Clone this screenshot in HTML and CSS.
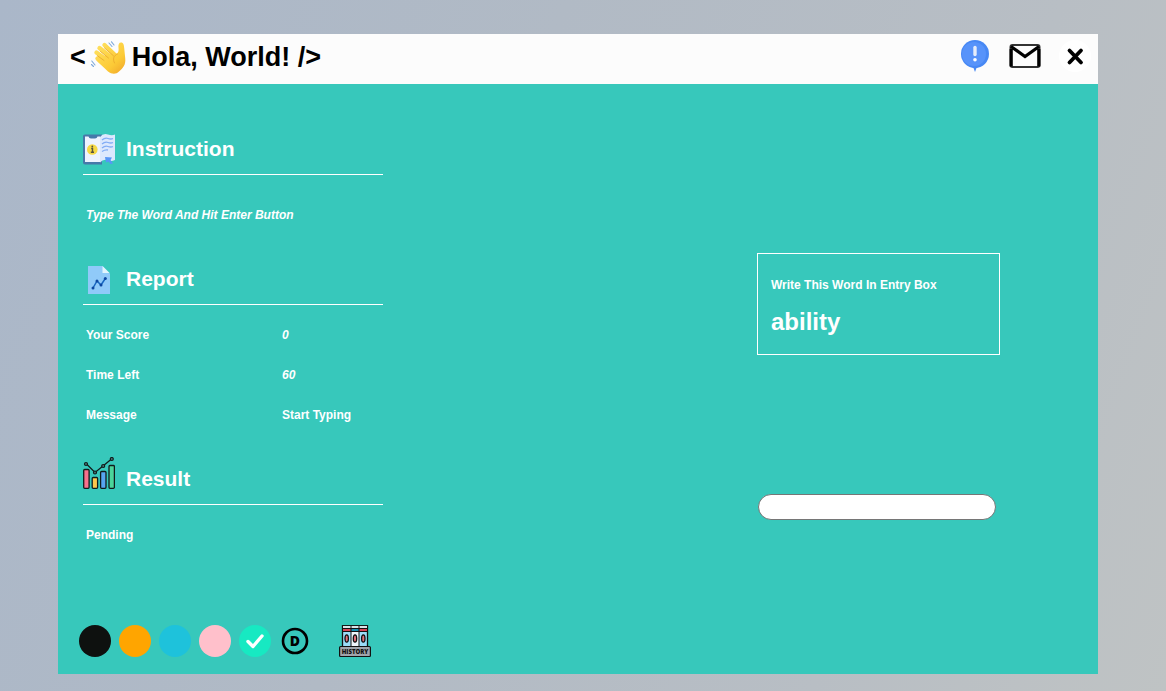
FILE: index.html
```html
<!DOCTYPE html>
<html lang="en">
<head>
<meta charset="utf-8">
<meta name="viewport" content="width=device-width, initial-scale=1">
<title>Hola, World!</title>
<link rel="stylesheet" href="styles.css">
</head>
<body>
<div class="window">
  <header class="topbar">
    <h1 class="brand">
      <span>&lt;</span>
      <svg class="wave" viewBox="0 0 38 36" aria-hidden="true">
        <defs>
          <linearGradient id="skin" gradientUnits="userSpaceOnUse" x1="6" y1="4" x2="34" y2="34">
            <stop offset="0" stop-color="#ffe262"/><stop offset=".65" stop-color="#fcca36"/><stop offset="1" stop-color="#f0a42a"/>
          </linearGradient>
        </defs>
        <g fill="none" stroke="url(#skin)" stroke-linecap="round">
          <path stroke-width="4.400" d="M6.500 12.500L18 21M9.500 8L22 18M14.500 5L26 16M7.500 18.500L15 25"/>
        </g>
        <path fill="url(#skin)" d="M13 16L25 13.500C28 14.500 29 11 28.500 8C28 4.500 29 2.500 31 2.500C33.500 2.500 34 5 34.200 8L35.200 18C36 25 33 28 29 31.500C26 34.500 22 34.500 18 31.500L8 22C6 19.500 8 17 10 18Z"/>
        <g fill="none" stroke="#e9a62b" stroke-width=".8" stroke-linecap="round">
          <path d="M7.500 15.800L14 20.500M10.500 11.500L18.500 18M14.500 8L23.500 15.800M27.500 14C23.500 15.500 22.500 19 24.500 23"/>
        </g>
        <g fill="none" stroke="#7fa9da" stroke-width="1.100" stroke-linecap="round">
          <path d="M19 3L22 6.500M21.500 1.800L24 5M1.800 21L5 25M1.500 24.500L3.500 26.500"/>
        </g>
      </svg>
      <span class="brand-name">Hola, World! /&gt;</span>
    </h1>
    <nav class="actions" aria-label="Window">
      <button class="icon-button" type="button" aria-label="About">
        <svg viewBox="0 0 32 32"><circle cx="16" cy="14" r="14" fill="#4788f4"/><path fill="#4788f4" d="M10 25L14.500 28L16 32L17.500 28L22 25Z"/><circle cx="15" cy="14" r="12" fill="#5793fa"/><path fill="none" stroke="#e6edfa" stroke-width="3.400" stroke-linecap="round" d="M16 7.500V14.500"/><circle cx="16" cy="19.800" r="1.800" fill="#fff"/></svg>
      </button>
      <button class="icon-button" type="button" aria-label="Mail">
        <svg viewBox="0 0 32 32"><rect x="1.500" y="5" width="29" height="22" rx="2" fill="none" stroke="#333" stroke-width="2"/><path fill="none" stroke="#000" stroke-width="3.200" d="M2.200 9V26.500M29.800 9V26.500M2 6.500L16 16.500L30 6.500"/></svg>
      </button>
      <button class="icon-button close" type="button" aria-label="Close">
        <svg viewBox="0 0 32 32"><path fill="none" stroke="#000" stroke-width="3.800" stroke-linecap="round" d="M10.500 10.500L22 22.500M22 10.500L10.500 22.500"/></svg>
      </button>
    </nav>
  </header>

  <main class="content">
    <div class="panels">
      <section class="panel">
        <h2 class="panel-title">
          <svg class="panel-icon" viewBox="0 0 32 32" aria-hidden="true"><path fill="#4679aa" d="M0 3Q0 1.500 2 1.500H19V31.500H2Q0 31.500 0 29.500Z"/><path fill="#edf3ff" d="M2 3.500H5.500Q6 5.500 8 5.500H12Q14 5.500 14.500 3.500H17V29H2Z"/><circle cx="9.300" cy="16.500" r="5.300" fill="#f6d946"/><path fill="none" stroke="#58553f" stroke-width="1.400" d="M8.200 15.500H9.500V19M7.800 19.300H11"/><circle cx="9.300" cy="13.500" r=".9" fill="#58553f"/><path fill="#dce8fd" d="M17 4Q20 0 25 1.500Q29 3 32 1.500V27Q28 29 24 27Q20 26 17 29.500Z"/><path fill="none" stroke="#82acf5" stroke-width="1.300" d="M19 7Q22 4.500 25 5.500T30 5.500M19 11Q22 8.500 25 9.500T30 9.500M19 15Q22 12.500 25 13.500T30 13.500M19 18.500Q22 16.500 25 17"/><path fill="#5796f7" d="M22 24L29 24.500L27.500 27L30 30.500L27.500 31L25.500 28.500L23 29.500Z"/></svg>
          Instruction
        </h2>
        <p class="row hint">Type The Word And Hit Enter Button</p>
      </section>

      <section class="panel">
        <h2 class="panel-title">
          <svg class="panel-icon" viewBox="0 0 32 32" aria-hidden="true"><path fill="#90caf9" d="M5 3H19.500L27 10.500V31H5Z"/><path fill="#e1f5fe" d="M19.500 3L26.500 10H19.500Z"/><path fill="none" stroke="#1765c0" stroke-width="1.500" d="M10 25L14 18L18 22L22.300 15.500"/><g fill="#0d47a1"><circle cx="10" cy="25" r="1.500"/><circle cx="14" cy="18" r="1.500"/><circle cx="18" cy="22" r="1.500"/><circle cx="22.300" cy="15.500" r="1.500"/></g></svg>
          Report
        </h2>
        <dl class="stats">
          <div class="row stat"><dt>Your Score</dt><dd class="number">0</dd></div>
          <div class="row stat"><dt>Time Left</dt><dd class="number">60</dd></div>
          <div class="row stat"><dt>Message</dt><dd>Start Typing</dd></div>
        </dl>
      </section>

      <section class="panel">
        <h2 class="panel-title">
          <svg class="panel-icon tall" viewBox="0 0 32 44" aria-hidden="true"><g stroke="#111c1c" stroke-width="1.300"><rect x=".7" y="12.500" width="5.400" height="18.800" rx="1" fill="#f8718d"/><rect x="9.200" y="20.500" width="5.400" height="10.800" rx="1" fill="#fbc64c"/><rect x="17.600" y="14.500" width="5.400" height="16.800" rx="1" fill="#57a5f0"/><rect x="26" y="8.500" width="5.400" height="22.800" rx="1" fill="#4bd59b"/></g><path fill="none" stroke="#111c1c" stroke-width="1.300" d="M3.500 7L12 15.500L20 9L28.500 2"/><g fill="#467a79" stroke="#111c1c" stroke-width="1.200"><circle cx="3" cy="7" r="1.500"/><circle cx="12" cy="15.500" r="1.500"/><circle cx="20.200" cy="9" r="1.500"/><circle cx="28.800" cy="2" r="1.500"/></g></svg>
          Result
        </h2>
        <p class="row result">Pending</p>
      </section>
    </div>

    <form class="typing">
      <label class="word-card" for="entry">
        <span>Write This Word In Entry Box</span>
        <strong class="word">ability</strong>
      </label>
      <input class="entry" id="entry" type="text" autocomplete="off">
    </form>
  </main>

  <footer class="toolbar">
    <button class="swatch black" type="button" aria-label="Black theme"></button>
    <button class="swatch orange" type="button" aria-label="Orange theme"></button>
    <button class="swatch blue" type="button" aria-label="Blue theme"></button>
    <button class="swatch pink" type="button" aria-label="Pink theme"></button>
    <button class="swatch green" type="button" aria-label="Green theme" aria-pressed="true">
      <svg viewBox="0 0 32 32"><path fill="none" stroke="#fff" stroke-width="3.400" stroke-linecap="round" stroke-linejoin="round" d="M9 16.500L14 21.500L23 11"/></svg>
    </button>
    <button class="swatch default" type="button" aria-label="Default theme">
      <svg viewBox="0 0 32 32"><circle cx="16" cy="16" r="12" fill="none" stroke="#000" stroke-width="2.600"/><text class="default-text" x="16" y="21" text-anchor="middle">D</text></svg>
    </button>
    <button class="history" type="button" aria-label="History">
      <svg viewBox="0 0 32 32"><rect x="3.500" y=".7" width="25" height="21" fill="#9bdcf8" stroke="#111" stroke-width="1.300"/><path fill="#eef5fb" d="M12 1H20V21H12Z"/><path fill="#d9e4e8" d="M4 1H28V3.500H4Z"/><path fill="#d64355" d="M4 3.500H12V6.500H4ZM20 3.500H28V6.500H20Z"/><path fill="#168eb0" d="M12 3.500H20V6.500H12Z"/><path stroke="#111" d="M12 1V21M20 1V21M3.500 3.500H28.500M3.500 6.500H28.500"/><g fill="#e66f7b" stroke="#111" stroke-width="1.300"><ellipse cx="7.700" cy="13.500" rx="1.700" ry="3.700"/><ellipse cx="16" cy="13.500" rx="1.700" ry="3.700"/><ellipse cx="24.300" cy="13.500" rx="1.700" ry="3.700"/></g><rect x=".6" y="21.500" width="30.800" height="10" rx="1" fill="#a0a4ab" stroke="#111" stroke-width="1.200"/><text class="history-text" x="16" y="29" text-anchor="middle">HISTORY</text></svg>
    </button>
  </footer>
</div>
</body>
</html>
```

FILE: styles.css
```css
* { box-sizing: border-box; }

body {
  margin: 0;
  min-height: 100vh;
  display: flex;
  padding: 34px 68px 17px 58px;
  background: linear-gradient(110deg, #aab7c9 0%, #b1bac5 40%, #b8bec4 75%, #bfc3c4 100%);
  font-family: "Liberation Sans", Arial, sans-serif;
  font-size: 12px;
  font-weight: bold;
  color: #fff;
}

h1, h2, p, dl, dd { margin: 0; }

button {
  display: block;
  padding: 0;
  border: 0;
  background: none;
  font: inherit;
  cursor: pointer;
}

svg { display: block; }

.window {
  flex: 1;
  display: flex;
  flex-direction: column;
  background: #37c8bb;
}

.topbar {
  display: flex;
  justify-content: space-between;
  height: 50px;
  padding: 0 7px 0 12px;
  background: #fcfcfc;
  color: #000;
}

.brand {
  display: flex;
  align-items: center;
  height: 47px;
  font-size: 27px;
}

.wave {
  width: 38px;
  height: 36px;
  margin-left: 4px;
}

.brand-name { padding-left: 4px; }

.actions {
  display: flex;
  gap: 18px;
  padding-top: 6px;
}

.icon-button,
.icon-button svg {
  width: 32px;
  height: 32px;
}

.close {
  border-radius: 50%;
  background: #fff;
}

.content {
  flex: 1;
  display: flex;
  justify-content: space-between;
  padding: 40px 98px 0 25px;
}

.panels {
  width: 300px;
  display: flex;
  flex-direction: column;
  gap: 19px;
}

.panel-title {
  display: flex;
  align-items: center;
  gap: 11px;
  height: 51px;
  border-bottom: 1px solid #fff;
  font-size: 21px;
}

.panel-icon {
  width: 32px;
  height: 32px;
}

.panel-icon.tall { height: 44px; }

.row {
  padding: 0 3px;
  line-height: 40px;
}

.hint {
  padding-top: 20px;
  font-style: italic;
}

.stats,
.result { padding-top: 10px; }

.stat {
  display: grid;
  grid-template-columns: 2fr 1fr;
}

.number { font-style: italic; }

.typing {
  width: 243px;
  padding-top: 129px;
}

.word-card {
  display: flex;
  flex-direction: column;
  gap: 15px;
  height: 102px;
  padding: 23px 13px;
  border: 1px solid #fff;
  line-height: 16px;
}

.word {
  font-size: 24px;
  line-height: 28px;
}

.entry {
  display: block;
  width: 238px;
  height: 26px;
  margin: 139px 0 0 1px;
  padding: 0 12px;
  border: 1px solid #767676;
  border-radius: 13px;
  background: #fff;
  font: inherit;
}

.toolbar {
  display: flex;
  gap: 8px;
  padding: 0 21px 17px;
}

.swatch {
  width: 32px;
  height: 32px;
  border-radius: 50%;
}

.black { background: #0e110f; }
.orange { background: #ffa500; }
.blue { background: #1ec2db; }
.pink { background: #ffc0cb; }
.green { background: #17e9c2; }

.default-text {
  font-family: "Open Sans", sans-serif;
  font-size: 14px;
  font-weight: 800;
}

.history { margin-left: 20px; }

.history svg {
  width: 32px;
  height: 32px;
}

.history-text {
  font-family: "Open Sans", sans-serif;
  font-size: 6px;
  font-weight: 800;
  fill: #111;
}
```
